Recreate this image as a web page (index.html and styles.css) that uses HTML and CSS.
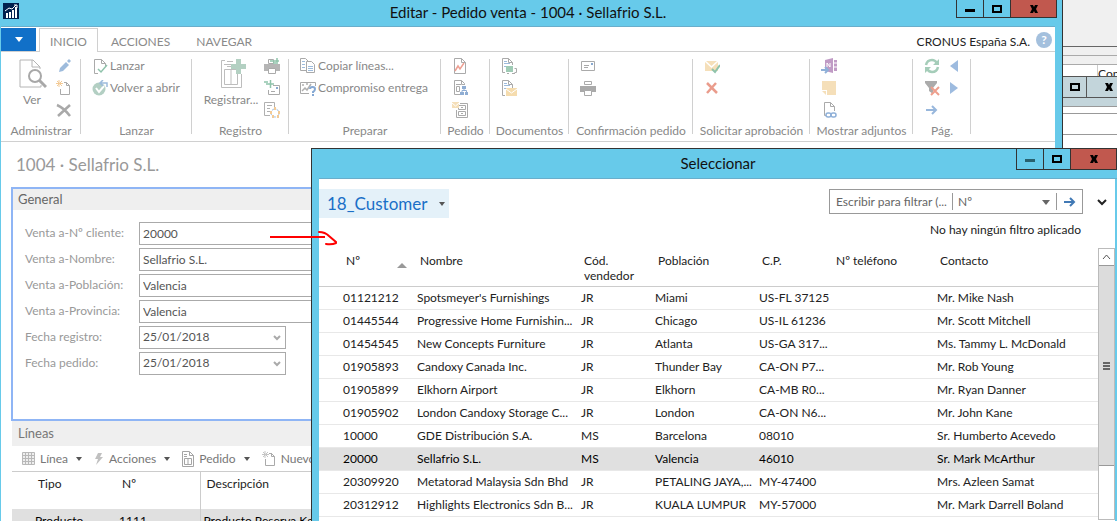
FILE: index.html
```
<!DOCTYPE html>
<html lang="es">
<head>
  <meta charset="UTF-8">
  <meta name="viewport" content="width=device-width, initial-scale=1.0">
  <title>Editar - Pedido venta - 1004 · Sellafrio S.L.</title>
  <link rel="stylesheet" href="styles.css">
</head>
<body>
  <!-- windows left behind on the desktop -->
  <div class="back-window">
    <div class="back-top"></div>
    <div class="back-bar"></div>
    <div class="back-bar"></div>
    <div class="back-header"><span>Con</span></div>
    <div class="back-title">
      <button aria-label="Maximizar"><svg width="12" height="10"><rect x="2" y="2" width="8" height="6" fill="none" stroke="#000" stroke-width="2"/></svg></button>
      <button aria-label="Cerrar"><svg width="10" height="8"><path d="M1 0h3l1 2 1-2h3L7 4l2 4H6L5 6 4 8H1l2-4z"/></svg></button>
    </div>
    <div class="back-frame"></div>
    <div class="back-gap"></div>
    <div class="back-field"></div>
  </div>

  <div class="window main-window">
    <header class="titlebar">
      <svg class="app-icon" width="16" height="16"><rect width="16" height="16" fill="#00204f"/><path d="M3 10h2v5H3zM6 9h2v6H6zM9 7h2v8H9zM12 4h2v11h-2z" fill="#fff"/><path d="M2 8l4-3 3 1 4-4M11 2h3v3" fill="none" stroke="#fff"/></svg>
      <h1>Editar - Pedido venta - 1004 · Sellafrio S.L.</h1>
      <div class="window-buttons">
        <button aria-label="Minimizar"><svg width="10" height="8"><rect y="4" width="10" height="3"/></svg></button>
        <button aria-label="Maximizar"><svg width="12" height="10"><rect x="2" y="2" width="8" height="6" fill="none" stroke="#000" stroke-width="2"/></svg></button>
        <button class="close" aria-label="Cerrar"><svg width="10" height="8"><path d="M1 0h3l1 2 1-2h3L7 4l2 4H6L5 6 4 8H1l2-4z"/></svg></button>
      </div>
    </header>

    <div class="window-body">
      <nav class="tabs">
        <button class="file-menu" aria-label="Menú"><svg width="8" height="5"><path d="M0 0h8L4 5z" fill="#fff"/></svg></button>
        <button class="tab active">INICIO</button>
        <button class="tab">ACCIONES</button>
        <button class="tab">NAVEGAR</button>
        <span class="company">CRONUS España S.A.</span>
        <button class="help" aria-label="Ayuda">?</button>
      </nav>

      <div class="ribbon">
        <section class="group">
          <div class="tools">
            <button class="big view">
              <svg width="30" height="32" viewBox="0 0 30 32" fill="none"><path d="M24 27v2H3V2h13l7 7v2M15 2v7h8" stroke="#b4b4b4"/><circle cx="18" cy="18" r="6" stroke="#a8a8a8" stroke-width="2" fill="#fff"/><path d="M22 22l7 7" stroke="#a8a8a8" stroke-width="3"/></svg>
              Ver
            </button>
            <div class="stack">
              <button aria-label="Editar"><svg width="16" height="16"><path d="M3 14l1-4 6-6 3 3-6 6z" fill="#9dbbdc"/><path d="M11 3l2-2 2 2-2 2z" fill="#9dbbdc"/></svg></button>
              <button aria-label="Nuevo"><svg width="16" height="16" fill="none"><path d="M4.500 9v5.500h9v-9l-3-3H8M10.500 2.500v3h3" stroke="#aaa"/><path d="M3 0v7M0 3.500h7M1 1l5 5M6 1L1 6" stroke="#f3ca95"/></svg></button>
              <button aria-label="Eliminar"><svg width="16" height="16"><path d="M1 3q7 3 13 11M14 3L2 14" stroke="#a9a9a9" stroke-width="2.500" fill="none"/></svg></button>
            </div>
          </div>
          <h2>Administrar</h2>
        </section>

        <section class="group">
          <div class="tools">
            <div class="stack">
              <button><svg width="16" height="16" fill="none"><path d="M6 15.500H2.500v-14h7l4 4V9M9.500 1.500v4h4" stroke="#aaa"/><path d="M6 11l3 3 6-7" stroke="#8fc3ab" stroke-width="1.500"/></svg>Lanzar</button>
              <button><svg width="16" height="16" fill="none"><circle cx="7" cy="9" r="6.500" fill="#b3cfc3"/><path d="M4 8l3 4 5-6" stroke="#fff" stroke-width="2"/><path d="M15 7V3H9M11 0L8 3l3 3" stroke="#9dbbdc" stroke-width="1.500"/></svg>Volver a abrir</button>
            </div>
          </div>
          <h2>Lanzar</h2>
        </section>

        <section class="group">
          <div class="tools">
            <button class="big post">
              <svg width="30" height="32" viewBox="0 0 30 32" fill="none"><path d="M9 2.500H5.500v27h20V16M8.500 11.500h13v15h-13zM15 12v14" stroke="#bdbdbd"/><path d="M11 3.500h6M8 6.500h8M11 8.500h6" stroke="#bdbdbd"/><path d="M20 1h5v5h5v5h-5v5h-5v-5h-5V6h5z" fill="#b3d0c2"/></svg>
              Registrar...
            </button>
            <div class="stack">
              <button aria-label="Registrar e imprimir"><svg width="16" height="16"><path d="M0 6h16v7H0z" fill="#b5b5b5"/><path d="M4.500 10.500h7v5h-7zM4.500 1.500h5v4h-5z" fill="#fff" stroke="#aaa"/><path d="M6 3h9M9 5h3M13 0v6" stroke="#8fc3ab" stroke-width="1.500"/></svg></button>
              <button aria-label="Registrar y enviar"><svg width="16" height="16" fill="none"><path d="M9 5.500h6.500v9h-11V10M7 11.500h4" stroke="#aaa"/><path d="M0 2h4M2 4h8M6.500 0v8" stroke="#8fc3ab" stroke-width="1.500"/><path d="M12 7h2v2h-2z" fill="#88a9d0"/></svg></button>
              <button aria-label="Registrar por lotes"><svg width="16" height="16" fill="none"><path d="M6 13.500H.5V.5h10V5M3 3.500h5M3 6.500h3M3 9.500h3" stroke="#b0b0b0"/><circle cx="11" cy="11" r="4" stroke="#9dbbdc" stroke-dasharray="3 2"/><path d="M11 5v3M7 9v3M15 9v3M9 13v3M14 13v3" stroke="#f3ca95" stroke-width="2"/></svg></button>
            </div>
          </div>
          <h2>Registro</h2>
        </section>

        <section class="group">
          <div class="tools">
            <div class="stack">
              <button><svg width="16" height="16" fill="none"><path d="M6 12.500H.5V.5h5l3 3" stroke="#aaa"/><path d="M6.500 3.500h5l3 3v8h-8z" fill="#fff" stroke="#aaa"/><path d="M2 3.500h3M2 6.500h3M2 9.500h3M8 8.500h5M8 10.500h5M8 12.500h5" stroke="#9dbbdc"/></svg>Copiar líneas...</button>
              <button><svg width="16" height="16" fill="none"><path d="M9 13.500H.5v-11h15V6" stroke="#aaa"/><path d="M2 11l3-3 2 2 4-6M2 5h2M6 4h2" stroke="#b0b0b0" stroke-width="1.500"/><path d="M10 9q0-2 2.500-2T15 9t-2 3v1M13 14v2" stroke="#85a8d3" stroke-width="2"/></svg>Compromiso entrega</button>
            </div>
          </div>
          <h2>Preparar</h2>
        </section>

        <section class="group">
          <div class="tools">
            <div class="stack">
              <button aria-label="Estadísticas"><svg width="16" height="16" fill="none"><path d="M2.500.5h7l4 4v11h-11zM9.500.5v4h4" stroke="#aaa"/><path d="M3 13l3-5 2 3 4-6" stroke="#ee9f92" stroke-width="1.500"/></svg></button>
              <button aria-label="Dimensiones"><svg width="16" height="16" fill="none"><path d="M8 14.500H2.500V.5h7l3 3V5M9.500.5v4h3M4 4.500h5M4.500 6.500h3v5h-3z" stroke="#aaa"/><path d="M10 6h4v3h-4zM8 12h4v3H8zM13 12h3v3h-3z" fill="#8fadd3"/><path d="M12 9v2M10 12v-1.500h4.500V12" stroke="#8fadd3"/></svg></button>
              <button aria-label="Archivo"><svg width="16" height="16" fill="none"><path d="M8 1.500h7.500v14h-11V8M6.500 3.500h7v4h-7zM6.500 9.500h7v4h-7zM9 5.500h2M9 11.500h2" stroke="#aaa"/><path d="M0 0h7v6H0z" fill="#f5dfb9"/><path d="M0 1l3.500 3L7 1" stroke="#fff"/></svg></button>
            </div>
          </div>
          <h2>Pedido</h2>
        </section>

        <section class="group">
          <div class="tools">
            <div class="stack">
              <button aria-label="Envíos"><svg width="16" height="16" fill="none"><path d="M4 14.500H1.500V.5h6l4 4V7M7.500.5v4h4" stroke="#aaa"/><path d="M3 3.500h3M3 5.500h6M3 8.500h2" stroke="#9dbbdc"/><path d="M5 8h7v6H5z" fill="#9fcbb5"/><path d="M13.500 10.500h2v4h-2M6 15.500h2M11 15.500h3" stroke="#aaa"/></svg></button>
              <button aria-label="Correos"><svg width="16" height="16" fill="none"><path d="M4 15.500H1.500V.5h6l4 4V8M7.500.5v4h4" stroke="#aaa"/><path d="M3 3.500h3M3 5.500h6M3 8.500h2" stroke="#9dbbdc"/><path d="M5 8h11v8H5z" fill="#f5dcae"/><path d="M5 9l5.500 4L16 9" stroke="#fff"/></svg></button>
            </div>
          </div>
          <h2>Documentos</h2>
        </section>

        <section class="group">
          <div class="tools">
            <div class="stack">
              <button aria-label="Enviar"><svg width="16" height="16" fill="none"><path d="M1.500 3.500h13v9h-13zM4 7.500h5M4 9.500h4" stroke="#aaa"/><path d="M11 5h2v2h-2z" fill="#88a9d0"/></svg></button>
              <button aria-label="Imprimir"><svg width="16" height="16"><path d="M0 6h16v6H0z" fill="#aaa"/><path d="M4.500 10.500h7v5h-7zM4.500 1.500h7v3h-7z" fill="#fff" stroke="#aaa"/></svg></button>
            </div>
          </div>
          <h2>Confirmación pedido</h2>
        </section>

        <section class="group">
          <div class="tools">
            <div class="stack">
              <button aria-label="Enviar aprobación"><svg width="16" height="16" fill="none"><path d="M1 3h13v10H1z" fill="#f5dfb9"/><path d="M1 3l6.500 6L14 3" stroke="#fff" stroke-width="1.500"/><path d="M8 11l3 3 5-7" stroke="#8fc3ab" stroke-width="2"/></svg></button>
              <button aria-label="Cancelar aprobación"><svg width="16" height="16"><path d="M3 3l10 10M12 3L3 13" stroke="#ea9c8c" stroke-width="2.500"/></svg></button>
            </div>
          </div>
          <h2>Solicitar aprobación</h2>
        </section>

        <section class="group">
          <div class="tools">
            <div class="stack">
              <button aria-label="OneNote"><svg width="16" height="16" fill="none"><path d="M4 2l8-2v15l-8-2z" fill="#c09bc5"/><path d="M13 2h3v11h-3z" fill="#c09bc5"/><path d="M13 5h3M13 9h3M6 9V5l3 4V5" stroke="#fff"/><path d="M0 12h6M4 9l3 3-3 3" stroke="#8fb0d8" stroke-width="2"/></svg></button>
              <button aria-label="Notas"><svg width="16" height="16"><path d="M1 1h14v14H6v-5H1z" fill="#f5dfb9"/><path d="M1 11h4v4z" fill="#f5dfb9"/></svg></button>
              <button aria-label="Vínculos"><svg width="16" height="16" fill="none"><path d="M5 13.500H3.500V.5h6l4 4V9M9.500.5v4h4" stroke="#aaa"/><rect x="5" y="11" width="5" height="4" rx="2" stroke="#8fb0d8" stroke-width="1.500"/><rect x="10" y="11" width="5" height="4" rx="2" stroke="#8fb0d8" stroke-width="1.500"/></svg></button>
            </div>
          </div>
          <h2>Mostrar adjuntos</h2>
        </section>

        <section class="group">
          <div class="tools">
            <div class="stack">
              <button aria-label="Actualizar"><svg width="16" height="16" fill="none"><path d="M2 7q1-5 6-5 3 0 5 3M14 9q-1 5-6 5-3 0-5-3" stroke="#a5cdb9" stroke-width="2.500"/><path d="M15 1v6H9zM1 15V9h6z" fill="#a5cdb9"/></svg></button>
              <button aria-label="Borrar filtro"><svg width="16" height="16"><path d="M1 1h12v2L9 8v6l-4-3V8L1 3z" fill="#ababab"/><path d="M7 7l8 8M15 7l-8 8" stroke="#ee9f8d" stroke-width="2"/></svg></button>
              <button aria-label="Ir a"><svg width="16" height="16"><path d="M2 8h10M8 4l4 4-4 4" fill="none" stroke="#98b7dc" stroke-width="2"/></svg></button>
            </div>
            <div class="stack">
              <button aria-label="Anterior"><svg width="16" height="16"><path d="M12 2v12L4 8z" fill="#9dbbdf"/></svg></button>
              <button aria-label="Siguiente"><svg width="16" height="16"><path d="M4 2v12l8-6z" fill="#9dbbdf"/></svg></button>
            </div>
          </div>
          <h2>Pág.</h2>
        </section>
      </div>

      <h2 class="page-title">1004 · Sellafrio S.L.</h2>

      <section class="fasttab general">
        <h3>General</h3>
        <form class="fields">
          <label for="cliente">Venta a-Nº cliente:</label>
          <input id="cliente" type="text" value="20000">
          <label for="nombre">Venta a-Nombre:</label>
          <input id="nombre" type="text" value="Sellafrio S.L.">
          <label for="poblacion">Venta a-Población:</label>
          <input id="poblacion" type="text" value="Valencia">
          <label for="provincia">Venta a-Provincia:</label>
          <input id="provincia" type="text" value="Valencia">
          <label for="registro">Fecha registro:</label>
          <div class="date">
            <select id="registro"><option>25/01/2018</option></select>
            <svg width="8" height="6"><path d="M1 1l3 3 3-3" fill="none" stroke="#aaa" stroke-width="2"/></svg>
          </div>
          <label for="pedido">Fecha pedido:</label>
          <div class="date">
            <select id="pedido"><option>25/01/2018</option></select>
            <svg width="8" height="6"><path d="M1 1l3 3 3-3" fill="none" stroke="#aaa" stroke-width="2"/></svg>
          </div>
        </form>
      </section>

      <section class="fasttab lines">
        <h3>Líneas</h3>
        <div class="toolbar">
          <button><svg width="13" height="13"><path d="M.5.5h12v12H.5zM.5 3.500h12M.5 6.500h12M.5 9.500h12M3.500.5v12M6.500.5v12M9.500.5v12" fill="#eee" stroke="#b8b8b8"/></svg>Línea<i class="caret"></i></button>
          <button><svg width="10" height="14"><path d="M4 1h4L6 5h3l-7 8 2-6H1z" fill="#c0c0c0"/></svg>Acciones<i class="caret"></i></button>
          <button><svg width="12" height="16" fill="none"><path d="M.5.5h7l4 4v11H.5zM7.500 1v3.500h4M2 3.500h3M2 5.500h3M2.500 7.500h7v6h-7zM6 8v6" stroke="#a5a5a5"/></svg>Pedido<i class="caret"></i></button>
          <button><svg width="14" height="16" fill="none"><path d="M3.500 8v6.500h9v-9l-3-3H7M9.500 2v3.500h3" stroke="#aaa"/><path d="M3 0v7M0 3.500h7M1 1l5 5M6 1L1 6" stroke="#c5c5c5"/></svg>Nuevo</button>
        </div>
        <table class="lines-table">
          <thead>
            <tr><th>Tipo</th><th>Nº</th><th>Descripción</th></tr>
          </thead>
          <tbody>
            <tr><td>Producto</td><td>1111</td><td>Producto Reserva Kg</td></tr>
          </tbody>
        </table>
      </section>
    </div>
  </div>

  <div class="window dialog">
    <header class="titlebar">
      <h1>Seleccionar</h1>
      <div class="window-buttons">
        <button aria-label="Minimizar"><svg width="10" height="8"><rect y="4" width="10" height="3" fill="#28616f"/></svg></button>
        <button aria-label="Maximizar"><svg width="12" height="10"><rect x="2" y="2" width="8" height="6" fill="none" stroke="#000" stroke-width="2"/></svg></button>
        <button class="close" aria-label="Cerrar"><svg width="10" height="8"><path d="M1 0h3l1 2 1-2h3L7 4l2 4H6L5 6 4 8H1l2-4z"/></svg></button>
      </div>
    </header>

    <div class="window-body">
      <div class="dialog-head">
        <button class="list-name">18_Customer<i class="caret"></i></button>
        <div class="filter">
          <input type="text" aria-label="Filtro" placeholder="Escribir para filtrar (...">
          <div class="filter-field">
            <select aria-label="Campo"><option>Nº</option></select>
            <svg width="8" height="5"><path d="M0 0h8L4 5z" fill="#666"/></svg>
          </div>
          <button aria-label="Aplicar"><svg width="12" height="12"><path d="M0 6h10M6 2l4 4-4 4" fill="none" stroke="#4179b5" stroke-width="2"/></svg></button>
        </div>
        <button class="expand" aria-label="Expandir"><svg width="10" height="7"><path d="M1 1l4 4 4-4" fill="none" stroke="#222" stroke-width="2"/></svg></button>
      </div>
      <p class="filter-status">No hay ningún filtro aplicado</p>

      <div class="list">
        <div class="list-rows">
          <table class="customers">
            <colgroup>
              <col class="c-no"><col class="c-name"><col class="c-code"><col class="c-city"><col class="c-zip"><col class="c-phone"><col>
            </colgroup>
            <thead>
              <tr>
                <th><span class="sorted">Nº<svg width="10" height="5"><path d="M0 5h10L5 0z" fill="#999"/></svg></span></th>
                <th>Nombre</th><th>Cód. vendedor</th><th>Población</th><th>C.P.</th><th>Nº teléfono</th><th>Contacto</th>
              </tr>
            </thead>
            <tbody>
              <tr><td>01121212</td><td>Spotsmeyer's Furnishings</td><td>JR</td><td>Miami</td><td>US-FL 37125</td><td></td><td>Mr. Mike Nash</td></tr>
              <tr><td>01445544</td><td>Progressive Home Furnishin...</td><td>JR</td><td>Chicago</td><td>US-IL 61236</td><td></td><td>Mr. Scott Mitchell</td></tr>
              <tr><td>01454545</td><td>New Concepts Furniture</td><td>JR</td><td>Atlanta</td><td>US-GA 317...</td><td></td><td>Ms. Tammy L. McDonald</td></tr>
              <tr><td>01905893</td><td>Candoxy Canada Inc.</td><td>JR</td><td>Thunder Bay</td><td>CA-ON P7...</td><td></td><td>Mr. Rob Young</td></tr>
              <tr><td>01905899</td><td>Elkhorn Airport</td><td>JR</td><td>Elkhorn</td><td>CA-MB R0...</td><td></td><td>Mr. Ryan Danner</td></tr>
              <tr><td>01905902</td><td>London Candoxy Storage C...</td><td>JR</td><td>London</td><td>CA-ON N6...</td><td></td><td>Mr. John Kane</td></tr>
              <tr><td>10000</td><td>GDE Distribución S.A.</td><td>MS</td><td>Barcelona</td><td>08010</td><td></td><td>Sr. Humberto Acevedo</td></tr>
              <tr class="selected"><td>20000</td><td>Sellafrio S.L.</td><td>MS</td><td>Valencia</td><td>46010</td><td></td><td>Sr. Mark McArthur</td></tr>
              <tr><td>20309920</td><td>Metatorad Malaysia Sdn Bhd</td><td>JR</td><td>PETALING JAYA,...</td><td>MY-47400</td><td></td><td>Mrs. Azleen Samat</td></tr>
              <tr><td>20312912</td><td>Highlights Electronics Sdn B...</td><td>JR</td><td>KUALA LUMPUR</td><td>MY-57000</td><td></td><td>Mr. Mark Darrell Boland</td></tr>
            </tbody>
          </table>
        </div>
        <div class="scrollbar">
          <button aria-label="Subir"><svg width="9" height="6"><path d="M1 5l3.500-4L8 5" fill="none" stroke="#555"/></svg></button>
          <div class="thumb"><i></i><i></i><i></i></div>
        </div>
      </div>
    </div>
  </div>

  <!-- red arrow from the customer field to the list -->
  <svg class="arrow" width="70" height="16" fill="none" stroke="#f00"><path d="M0 7h55" stroke-width="2"/><path d="M49 2q6 0 10 4l7 6M66 13q-4 2-10 1" stroke-width="2" stroke-linecap="round"/></svg>
</body>
</html>
```
FILE: styles.css
```
* {
  margin: 0;
  padding: 0;
  box-sizing: border-box;
}

body {
  position: relative;
  height: 100vh;
  overflow: hidden;
  background: #fff;
  font-family: Lato, "Open Sans", sans-serif;
  font-size: 12px;
  line-height: 16px;
  color: #222;
}

button,
input,
select {
  font: inherit;
  color: inherit;
  background: none;
  border: none;
  border-radius: 0;
  appearance: none;
  outline: none;
}

h1,
h2,
h3,
th {
  font-weight: normal;
}

svg {
  flex: none;
  display: block;
}

.caret {
  border: 3px solid transparent;
  border-top: 4px solid #555;
  border-bottom: none;
}

/* background windows */
.back-window {
  margin-left: calc(100% - 54px);
}

.back-top {
  height: 47px;
  background: #f0f0f0;
  border-bottom: 1px solid #666;
}

.back-bar {
  height: 9px;
  background: #f0f0f0;
  border-bottom: 1px solid #aaa;
}

.back-header {
  height: 11px;
  padding-left: 34px;
  overflow: hidden;
  line-height: 18px;
}

.back-header span {
  display: block;
  border-left: 1px solid #ccc;
}

.back-title {
  display: flex;
  height: 22px;
  background: #c3d5db;
  border: 1px solid #555;
  border-width: 1px 0;
}

.back-title button {
  display: flex;
  align-items: center;
  justify-content: center;
  width: 24px;
  border-right: 1px solid #555;
}

.back-title button:last-child {
  flex: 1;
  border: none;
  padding-left: 14px;
}

.back-frame {
  height: 9px;
  background: #c3d5db;
  border-bottom: 1px solid #999;
}

.back-gap {
  height: 7px;
  border-bottom: 1px solid #999;
}

.back-field {
  height: 21px;
  border-bottom: 1px solid #999;
}

/* windows */
.window {
  position: absolute;
  display: flex;
  flex-direction: column;
  background: #67caea;
}

.main-window {
  top: 0;
  left: 0;
  right: 54px;
  bottom: 0;
  padding: 0 7px 0 1px;
  border-right: 1px solid #333;
}

.dialog {
  top: 148px;
  left: 311px;
  right: 0;
  bottom: 0;
  padding: 0 2px 0 7px;
  border: 1px solid #333;
  border-width: 1px 0 0 1px;
}

.titlebar {
  display: grid;
  grid-template-columns: 1fr auto 1fr;
  align-items: start;
  flex: none;
  height: 27px;
  color: #111;
  border-bottom: 1px solid #6aaecb;
}

.titlebar h1 {
  grid-column: 2;
  font-size: 15px;
  line-height: 24px;
}

.app-icon {
  margin: 3px 0 0 2px;
}

.dialog .titlebar {
  height: 30px;
  margin-right: -2px;
}

.dialog .titlebar h1 {
  line-height: 29px;
}

.window-buttons {
  display: flex;
  justify-self: end;
  height: 18px;
  border: 1px solid #333;
  border-top: none;
}

.main-window .window-buttons {
  margin-right: -2px;
}

.dialog .window-buttons {
  height: 21px;
}

.window-buttons button {
  display: flex;
  align-items: center;
  justify-content: center;
  width: 27px;
  border-right: 1px solid #333;
}

.window-buttons .close {
  width: 45px;
  background: #c1584e;
  border: none;
}

.window-body {
  flex: 1;
  min-height: 0;
  overflow: hidden;
  background: #fff;
}

/* ribbon */
.tabs {
  display: flex;
  height: 25px;
  padding-top: 1px;
  border-bottom: 1px solid #d0d0d0;
  color: #8a8a8a;
}

.file-menu {
  display: flex;
  align-items: center;
  justify-content: center;
  width: 35px;
  height: 23px;
  margin-right: 3px;
  background: #1170c8;
}

.tab {
  padding: 3px 13px 0;
  height: 24px;
}

.tab.active {
  padding: 2px 10px 0;
  background: #fff;
  border: 1px solid #d0d0d0;
  border-bottom: none;
}

.company {
  margin-left: auto;
  padding-top: 6px;
  color: #222;
}

.help {
  width: 16px;
  height: 16px;
  margin: 4px 3px 0 6px;
  border-radius: 50%;
  background: #a4c0dd;
  color: #fff;
  font-weight: bold;
}

.ribbon {
  display: grid;
  grid-template-columns: 80px 111px 97px 152px 49px 79px 124px 117px 103px 58px;
  height: 90px;
  border-bottom: 1px solid #d0d0d0;
  color: #888;
}

.group {
  position: relative;
  display: flex;
  flex-direction: column;
  padding-top: 3px;
}

.group::after {
  content: "";
  position: absolute;
  top: 7px;
  right: 0;
  bottom: 7px;
  width: 1px;
  background: #d0d0d0;
}

.group h2 {
  font-size: 12px;
  line-height: 20px;
  text-align: center;
  white-space: nowrap;
}

.tools {
  display: flex;
  height: 66px;
  padding-left: 11px;
  white-space: nowrap;
}

.stack button {
  display: flex;
  align-items: center;
  gap: 2px;
  min-width: 22px;
  height: 22px;
}

.big {
  display: flex;
  flex-direction: column;
  align-items: center;
  align-self: flex-start;
  gap: 2px;
  padding-top: 3px;
}

.view {
  width: 40px;
  margin-right: 4px;
}

.post {
  width: 56px;
  margin-right: 5px;
}

/* page */
.page-title {
  padding: 11px 15px 10px;
  font-size: 17px;
  line-height: 24px;
  color: #999;
}

.fasttab {
  margin-left: 11px;
}

.fasttab h3 {
  padding-left: 6px;
  background: #efefef;
  font-size: 13px;
  line-height: 25px;
  color: #777;
}

.general {
  height: 234px;
  margin-left: 10px;
  border: 2px solid #8fb5f5;
}

.general h3 {
  padding-left: 5px;
  line-height: 21px;
  color: #666;
}

.fields {
  display: grid;
  grid-template-columns: 114px 1fr;
  row-gap: 3px;
  padding: 12px 0 0 12px;
}

.fields label {
  line-height: 22px;
  color: #999;
}

.fields input,
.fields select {
  width: 100%;
  height: 23px;
  padding: 0 3px 1px;
  border: 1px solid #aaa;
  color: #555;
}

.date {
  position: relative;
  width: 147px;
}

.date svg {
  position: absolute;
  top: 9px;
  right: 5px;
}

.toolbar {
  display: flex;
  gap: 12px;
  height: 26px;
  padding-left: 10px;
  color: #777;
  border-bottom: 1px solid #ccc;
}

.toolbar button {
  display: flex;
  align-items: center;
  gap: 5px;
}

.toolbar .caret {
  margin-left: 3px;
}

.lines-table {
  width: 100%;
  table-layout: fixed;
  border-collapse: collapse;
  text-align: left;
}

.lines-table th {
  width: 84px;
  height: 37px;
  padding: 4px 0 0 26px;
  vertical-align: top;
}

.lines-table td {
  height: 23px;
  padding: 0 0 0 23px;
  background: #e0e0e0;
  color: #000;
}

.lines-table th:nth-child(2) {
  width: 104px;
}

.lines-table th:last-child,
.lines-table td:last-child {
  width: auto;
  border-left: 1px solid #ccc;
  padding-left: 6px;
}

.lines-table td:last-child {
  padding-left: 3px;
}

/* dialog */
.dialog-head {
  display: flex;
  align-items: flex-start;
  padding: 10px 8px 0 0;
}

.list-name {
  display: flex;
  align-items: center;
  gap: 12px;
  height: 29px;
  padding: 0 4px 0 8px;
  background: #e4f1f9;
  font-size: 17px;
  color: #1a6fc7;
}

.filter {
  display: flex;
  width: 254px;
  height: 25px;
  margin-left: auto;
  border: 1px solid #999;
  color: #666;
}

.filter input {
  width: 122px;
  padding-left: 6px;
}

.filter input::placeholder {
  color: #666;
}

.filter-field {
  position: relative;
  flex: 1;
  margin: 3px 0;
  border: 1px solid #999;
  border-width: 0 1px;
}

.filter-field select {
  width: 100%;
  height: 100%;
  padding-left: 5px;
}

.filter-field svg {
  position: absolute;
  top: 7px;
  right: 6px;
}

.filter button {
  display: flex;
  align-items: center;
  justify-content: center;
  width: 25px;
}

.expand {
  margin: 10px 0 0 14px;
}

.filter-status {
  padding: 4px 34px 10px 0;
  text-align: right;
}

.list {
  display: flex;
  height: 272px;
}

.list-rows {
  flex: 1;
}

.customers {
  width: 100%;
  table-layout: fixed;
  border-collapse: collapse;
  text-align: left;
}

.customers th {
  height: 38px;
  padding: 5px 10px 0 3px;
  vertical-align: top;
  line-height: 15px;
  border-bottom: 1px solid #ccc;
}

.customers td {
  height: 23px;
  white-space: nowrap;
  border-bottom: 1px solid #e8e8e8;
}

.customers th:first-child {
  padding-left: 27px;
}

.customers td:first-child {
  padding-left: 24px;
}

.sorted {
  display: flex;
  align-items: flex-end;
  justify-content: space-between;
}

.selected {
  background: #e0e0e0;
  color: #000;
}

.c-no {
  width: 98px;
}

.c-name {
  width: 164px;
}

.c-code,
.c-zip {
  width: 74px;
}

.c-city {
  width: 104px;
}

.c-phone {
  width: 104px;
}

.scrollbar {
  width: 17px;
  border: 1px solid #bbb;
}

.scrollbar button {
  display: flex;
  align-items: center;
  justify-content: center;
  width: 15px;
  height: 16px;
}

.thumb {
  display: flex;
  flex-direction: column;
  align-items: center;
  justify-content: center;
  gap: 1px;
  height: 201px;
  background: #dcdcdc;
  border: 1px solid #999;
  border-width: 1px 0;
}

.thumb i {
  width: 7px;
  height: 2px;
  background: #666;
}

.arrow {
  position: absolute;
  top: 230px;
  left: 270px;
}
```
